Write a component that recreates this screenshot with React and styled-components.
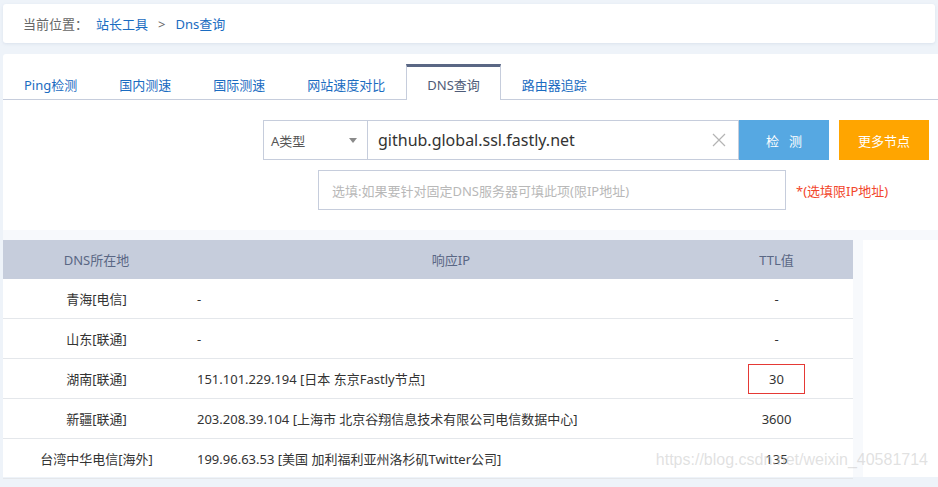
import React from 'react'
import styled, { createGlobalStyle } from 'styled-components'

const GlobalStyle = createGlobalStyle`
  html, body {
    margin: 0;
    padding: 0;
    background: #eef3f9;
    font-family: "Noto Sans", "Noto Sans CJK SC", sans-serif;
    font-size: 13px;
    color: #333;
  }
`

const tabs = ['Ping检测', '国内测速', '国际测速', '网站速度对比', 'DNS查询', '路由器追踪']

const rows = [
  { loc: '青海[电信]', ip: '-', ttl: '-' },
  { loc: '山东[联通]', ip: '-', ttl: '-' },
  { loc: '湖南[联通]', ip: '151.101.229.194 [日本 东京Fastly节点]', ttl: '30', mark: true },
  { loc: '新疆[联通]', ip: '203.208.39.104 [上海市 北京谷翔信息技术有限公司电信数据中心]', ttl: '3600' },
  { loc: '台湾中华电信[海外]', ip: '199.96.63.53 [美国 加利福利亚州洛杉矶Twitter公司]', ttl: '135' },
]

function App() {
  return (
    <Page>
      <GlobalStyle />
      <Breadcrumb>
        <Label>当前位置：</Label>
        <Crumb>站长工具</Crumb>
        <Sep>&gt;</Sep>
        <Crumb>Dns查询</Crumb>
      </Breadcrumb>
      <Card>
        <TabBar>
          {tabs.map((t) => (
            <Tab key={t} $active={t === 'DNS查询'}>{t}</Tab>
          ))}
        </TabBar>
        <QueryRow>
          <Select>
            <span>A类型</span>
            <Caret />
          </Select>
          <HostInput>
            <span>github.global.ssl.fastly.net</span>
            <svg width="14" height="14" viewBox="0 0 14 14">
              <path d="M1 1 L13 13 M13 1 L1 13" stroke="#b4b4b4" strokeWidth="1.2" />
            </svg>
          </HostInput>
          <CheckButton>检&nbsp;&nbsp;&nbsp;测</CheckButton>
          <MoreButton>更多节点</MoreButton>
        </QueryRow>
        <ServerRow>
          <ServerInput>选填:如果要针对固定DNS服务器可填此项(限IP地址)</ServerInput>
          <Hint>*(选填限IP地址)</Hint>
        </ServerRow>
        <ResultArea>
          <Table>
            <HeadRow>
              <LocCell>DNS所在地</LocCell>
              <HeadIpCell>响应IP</HeadIpCell>
              <TtlCell>TTL值</TtlCell>
            </HeadRow>
            {rows.map((r) => (
              <Row key={r.loc}>
                <LocCell>{r.loc}</LocCell>
                <IpCell>{r.ip}</IpCell>
                <TtlCell>{r.mark ? <Marked>{r.ttl}</Marked> : r.ttl}</TtlCell>
              </Row>
            ))}
          </Table>
          <SidePanel />
          <Watermark>https://blog.csdn.net/weixin_40581714</Watermark>
        </ResultArea>
      </Card>
    </Page>
  )
}

export default App

const Page = styled.div`
  padding: 4px 0 0 3px;
  min-height: 487px;
  box-sizing: border-box;
  overflow: hidden;
`

const Breadcrumb = styled.div`
  height: 39px;
  background: #fff;
  border-radius: 3px;
  box-shadow: 0 1px 3px rgba(180, 195, 215, 0.35);
  display: flex;
  align-items: center;
  padding-left: 20px;
  margin-right: 3px;
`

const Label = styled.span`
  color: #666;
  margin-right: 8px;
`

const Crumb = styled.span`
  color: #1a6cc1;
`

const Sep = styled.span`
  color: #666;
  margin: 0 10px;
`

const Card = styled.div`
  margin-top: 11px;
  background: #fff;
  border-radius: 3px 0 0 0;
  padding-top: 10px;
`

const TabBar = styled.div`
  display: flex;
  border-bottom: 1px solid #c6cddc;
  height: 35px;
`

const Tab = styled.div`
  box-sizing: border-box;
  padding: 2px 20px 0;
  display: flex;
  align-items: center;
  color: ${(p) => (p.$active ? '#4e5b78' : '#1a6cc1')};
  background: #fff;
  border-top: 3px solid ${(p) => (p.$active ? '#5a6784' : 'transparent')};
  border-left: 1px solid ${(p) => (p.$active ? '#c6cddc' : 'transparent')};
  border-right: 1px solid ${(p) => (p.$active ? '#c6cddc' : 'transparent')};
  margin-bottom: ${(p) => (p.$active ? '-1px' : '0')};
  height: ${(p) => (p.$active ? '36px' : '35px')};
`

const QueryRow = styled.div`
  display: flex;
  justify-content: flex-end;
  padding-right: 9px;
  margin-top: 20px;
  height: 40px;
`

const Select = styled.div`
  width: 105px;
  box-sizing: border-box;
  border: 1px solid #c6cddc;
  display: flex;
  align-items: center;
  justify-content: space-between;
  padding: 0 10px 0 7px;
  color: #555;
  font-size: 13px;
`

const Caret = styled.span`
  width: 0;
  height: 0;
  border-left: 4px solid transparent;
  border-right: 4px solid transparent;
  border-top: 5px solid #8a8a8a;
`

const HostInput = styled.div`
  width: 371px;
  box-sizing: border-box;
  border: 1px solid #c6cddc;
  border-left: none;
  display: flex;
  align-items: center;
  justify-content: space-between;
  padding: 0 12px 0 10px;
  font-size: 16px;
  color: #333;
`

const CheckButton = styled.div`
  width: 90px;
  background: #56a8e2;
  color: #fff;
  font-size: 13px;
  display: flex;
  align-items: center;
  justify-content: center;
`

const MoreButton = styled(CheckButton)`
  background: #ffa500;
  margin-left: 10px;
`

const ServerRow = styled.div`
  display: flex;
  align-items: center;
  margin: 10px 0 0 315px;
  height: 40px;
`

const ServerInput = styled.div`
  width: 468px;
  height: 40px;
  box-sizing: border-box;
  border: 1px solid #c6cddc;
  display: flex;
  align-items: center;
  padding-left: 13px;
  color: #b8b8b8;
  font-size: 13px;
`

const Hint = styled.span`
  color: #f2462b;
  margin-left: 10px;
`

const ResultArea = styled.div`
  position: relative;
  margin-top: 20px;
  background: #f7f9fc;
  padding-top: 10px;
  display: flex;
  gap: 10px;
  height: 247px;
  box-sizing: border-box;
`

const Table = styled.div`
  width: 850px;
  background: #fff;
`

const SidePanel = styled.div`
  flex: 1;
  background: #fff;
`

const Row = styled.div`
  display: flex;
  height: 40px;
  box-sizing: border-box;
  border-bottom: 1px solid #e4e7eb;
  align-items: center;
`

const HeadRow = styled(Row)`
  height: 39px;
  background: #c6cddc;
  color: #5a6784;
  border-bottom: none;
`

const LocCell = styled.div`
  width: 187px;
  text-align: center;
`

const IpCell = styled.div`
  width: 522px;
  padding-left: 7px;
  box-sizing: border-box;
`

const HeadIpCell = styled(IpCell)`
  padding-left: 0;
  text-align: center;
`

const TtlCell = styled.div`
  flex: 1;
  text-align: center;
  padding-right: 12px;
  display: flex;
  justify-content: center;
`

const Marked = styled.span`
  display: inline-flex;
  align-items: center;
  justify-content: center;
  width: 57px;
  height: 30px;
  box-sizing: border-box;
  border: 1px solid #e53935;
`

const Watermark = styled.div`
  position: absolute;
  right: 10px;
  bottom: 8px;
  font-family: "Liberation Sans", Arial, sans-serif;
  font-size: 16px;
  color: rgba(200, 200, 200, 0.55);
  pointer-events: none;
`
